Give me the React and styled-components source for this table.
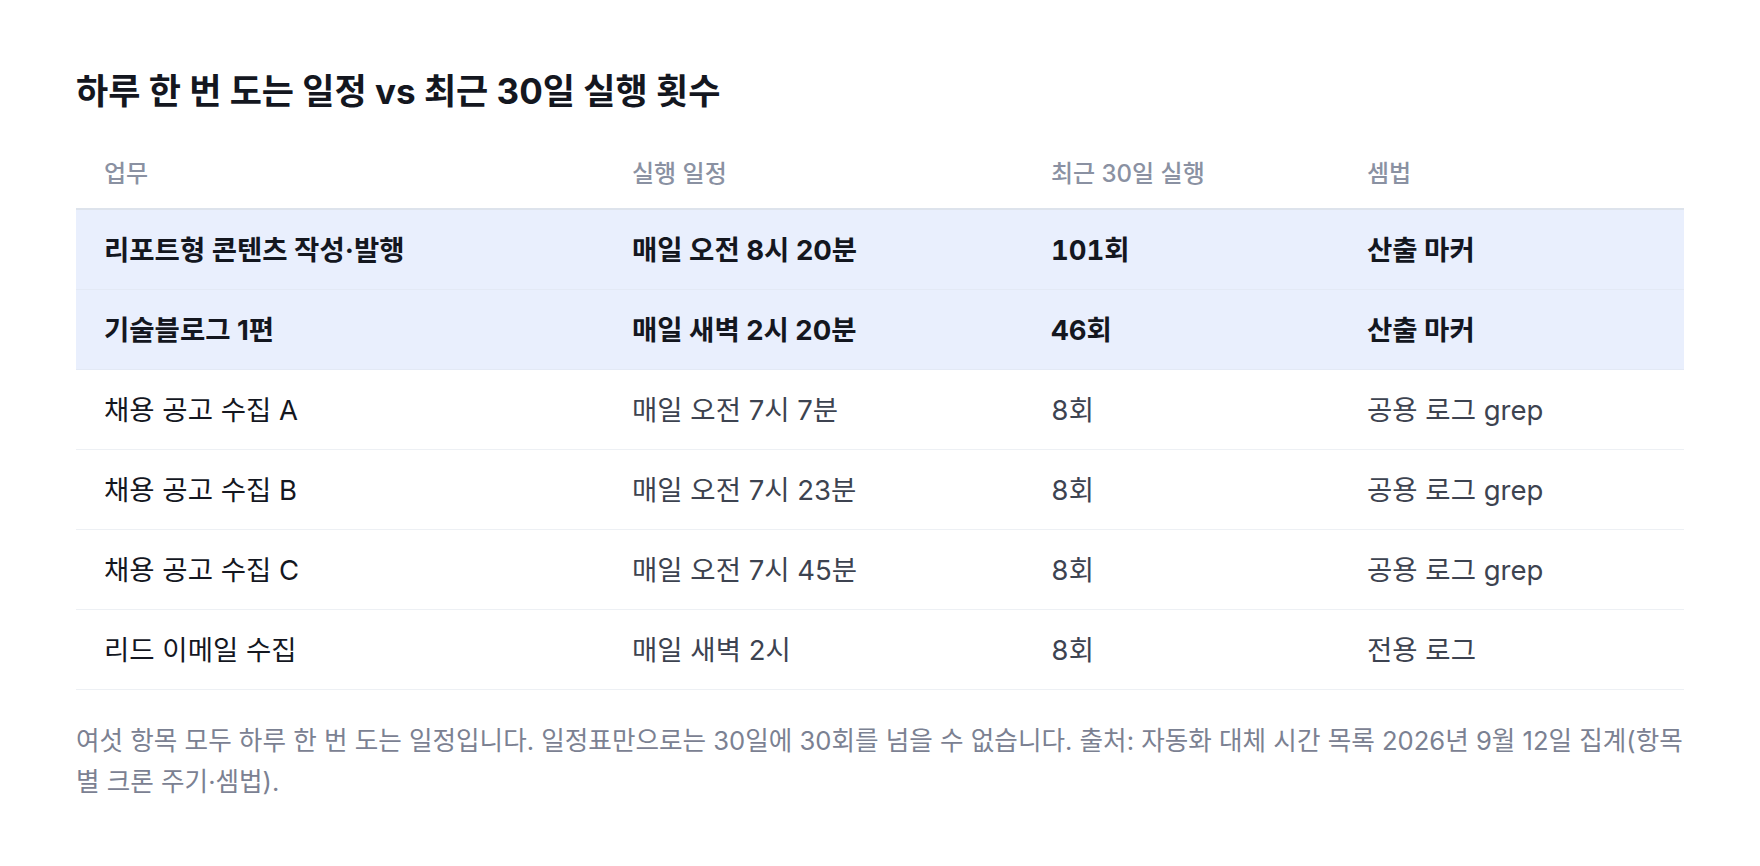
import React from "react";
import styled, { createGlobalStyle } from "styled-components";

const rows = [
	{ task: "리포트형 콘텐츠 작성·발행", schedule: "매일 오전 8시 20분", runs: "101회", method: "산출 마커", hot: true },
	{ task: "기술블로그 1편", schedule: "매일 새벽 2시 20분", runs: "46회", method: "산출 마커", hot: true },
	{ task: "채용 공고 수집 A", schedule: "매일 오전 7시 7분", runs: "8회", method: "공용 로그 grep" },
	{ task: "채용 공고 수집 B", schedule: "매일 오전 7시 23분", runs: "8회", method: "공용 로그 grep" },
	{ task: "채용 공고 수집 C", schedule: "매일 오전 7시 45분", runs: "8회", method: "공용 로그 grep" },
	{ task: "리드 이메일 수집", schedule: "매일 새벽 2시", runs: "8회", method: "전용 로그" },
];

const App = () => {
	return (
		<>
			<GlobalStyle />
			<Page>
				<Title>하루 한 번 도는 일정 vs 최근 30일 실행 횟수</Title>
				<Table>
					<colgroup>
						<col style={{ width: "528px" }} />
						<col style={{ width: "419px" }} />
						<col style={{ width: "316px" }} />
						<col />
					</colgroup>
					<thead>
						<tr>
							<Th>업무</Th>
							<Th>실행 일정</Th>
							<Th>최근 30일 실행</Th>
							<Th>셈법</Th>
						</tr>
					</thead>
					<tbody>
						{rows.map((r) => (
							<Row key={r.task} $hot={r.hot}>
								<Td>{r.task}</Td>
								<Td>{r.schedule}</Td>
								<Td $num>{r.runs}</Td>
								<Td>{r.method}</Td>
							</Row>
						))}
					</tbody>
				</Table>
				<Note>
					여섯 항목 모두 하루 한 번 도는 일정입니다. 일정표만으로는 30일에 30회를 넘을 수 없습니다. 출처: 자동화 대체 시간 목록 2026년 9월 12일 집계(항목별 크론 주기·셈법).
				</Note>
			</Page>
		</>
	);
};

export default App;

const GlobalStyle = createGlobalStyle`
	body {
		margin: 0;
		background: #ffffff;
		font-family: Inter, "Noto Sans CJK KR", sans-serif;
	}
`;

const Page = styled.div`
	padding: 70px 76px 40px;
`;

const Title = styled.h2`
	margin: 0;
	font-size: 35px;
	line-height: 43px;
	font-weight: 700;
	color: #14171f;
`;

const Table = styled.table`
	width: 100%;
	margin-top: 21px;
	border-collapse: separate;
	border-spacing: 0;
	table-layout: fixed;
`;

const Th = styled.th`
	height: 74px;
	padding: 0 28px;
	text-align: left;
	vertical-align: middle;
	font-size: 24px;
	font-weight: 500;
	color: #8a91a2;
	border-bottom: 2px solid #dde3ec;
`;

const Row = styled.tr`
	background: ${(p) => (p.$hot ? "#e9effd" : "transparent")};
	td {
		font-weight: ${(p) => (p.$hot ? 700 : 400)};
		color: ${(p) => (p.$hot ? "#14171f" : "#3d4350")};
		border-bottom-color: ${(p) => (p.$hot ? "#e3e9f5" : "#edf0f4")};
	}
	td:first-child {
		color: #14171f;
	}
`;

const Td = styled.td`
	height: 75px;
	padding: 0 28px 4px;
	vertical-align: middle;
	font-size: 27.5px;
	font-variant-numeric: ${(p) => (p.$num ? "tabular-nums" : "normal")};
	border-bottom: 1px solid #edf0f4;
	white-space: nowrap;
`;

const Note = styled.p`
	margin: 30px 0 0;
	font-size: 25.6px;
	line-height: 41px;
	color: #7b8192;
`;
